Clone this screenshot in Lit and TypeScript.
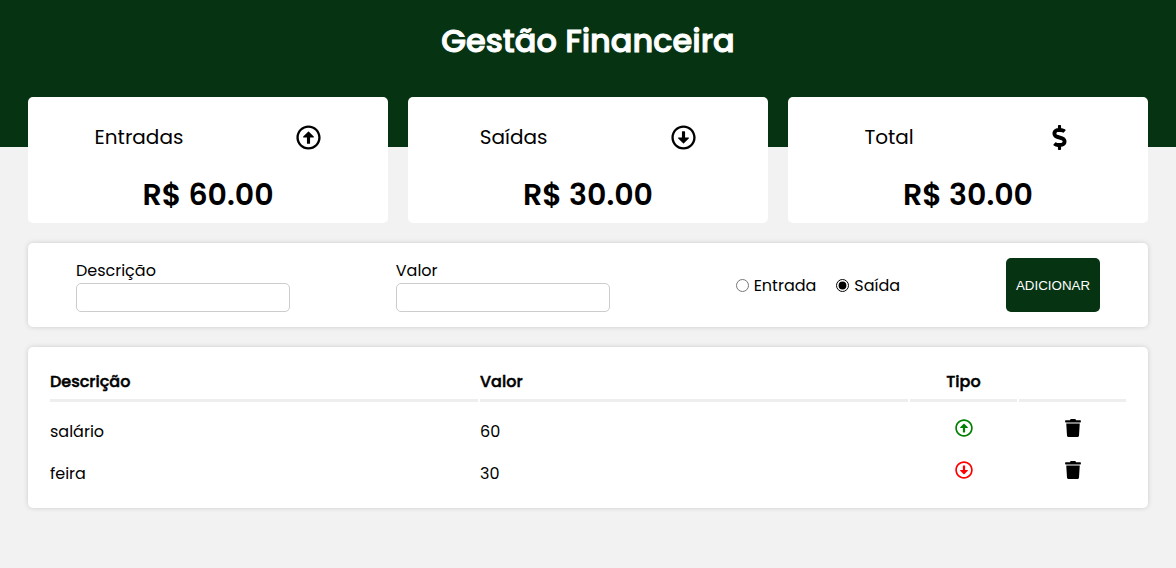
import { LitElement, html, css } from "lit";
import { customElement, property, state } from "lit/decorators.js";

type IconName = "up" | "down" | "dollar" | "trash";

const ICONS: Record<IconName, { box: string; d: string }> = {
  up: {
    box: "0 0 512 512",
    d: "M256 504c137 0 248-111 248-248S393 8 256 8 8 119 8 256s111 248 248 248zm0-448c110.5 0 200 89.5 200 200s-89.5 200-200 200S56 366.5 56 256 145.5 56 256 56zm20 328h-40c-6.6 0-12-5.4-12-12V256h-67c-10.7 0-16-12.9-8.5-20.5l99-99c4.7-4.7 12.3-4.7 17 0l99 99c7.6 7.6 2.2 20.5-8.5 20.5h-67v116c0 6.6-5.4 12-12 12z",
  },
  down: {
    box: "0 0 512 512",
    d: "M256 8C119 8 8 119 8 256s111 248 248 248 248-111 248-248S393 8 256 8zm0 448c-110.5 0-200-89.5-200-200S145.5 56 256 56s200 89.5 200 200-89.5 200-200 200zm-32-316v116h-67c-10.7 0-16 12.9-8.5 20.5l99 99c4.7 4.7 12.3 4.7 17 0l99-99c7.6-7.6 2.2-20.5-8.5-20.5h-67V140c0-6.6-5.4-12-12-12h-40c-6.6 0-12 5.4-12 12z",
  },
  dollar: {
    box: "0 0 288 512",
    d: "M209.2 233.4l-108-31.6C88.7 198.2 80 186.5 80 173.5c0-16.3 13.2-29.5 29.5-29.5h66.3c12.2 0 24.2 3.7 34.2 10.5 6.1 4.1 14.3 3.1 19.5-2l34.8-34c7.1-6.9 6.1-18.4-1.8-24.5C238 74.8 207.4 64.1 176 64V16c0-8.8-7.2-16-16-16h-32c-8.8 0-16 7.2-16 16v48h-2.5C45.8 64-5.4 118.7.5 183.6c4.2 46.1 39.4 83.6 83.8 96.6l102.5 30c12.5 3.7 21.2 15.3 21.2 28.3 0 16.3-13.2 29.5-29.5 29.5h-66.3C100 368 88 364.3 78 357.5c-6.1-4.1-14.3-3.1-19.5 2l-34.8 34c-7.1 6.9-6.1 18.4 1.8 24.5 24.5 19.2 55.1 29.9 86.5 30v48c0 8.8 7.2 16 16 16h32c8.8 0 16-7.2 16-16v-48.2c46.6-.9 90.3-28.6 105.7-72.7 21.5-61.6-14.6-124.8-72.5-141.7z",
  },
  trash: {
    box: "0 0 448 512",
    d: "M432 32H312l-9.4-18.7A24 24 0 0 0 281.1 0H166.8a23.72 23.72 0 0 0-21.4 13.3L136 32H16A16 16 0 0 0 0 48v32a16 16 0 0 0 16 16h416a16 16 0 0 0 16-16V48a16 16 0 0 0-16-16zM53.2 467a48 48 0 0 0 47.9 45h245.8a48 48 0 0 0 47.9-45L416 128H32z",
  },
};

@customElement("app-icon")
export class AppIcon extends LitElement {
  @property() name: IconName = "up";

  static styles = css`
    :host {
      display: block;
      width: 18px;
      height: 18px;
    }
    .glyph {
      display: block;
      width: 100%;
      height: 100%;
      fill: currentColor;
    }
  `;

  render() {
    const icon = ICONS[this.name];
    return html`<svg class="glyph" viewBox=${icon.box} aria-hidden="true"><path d=${icon.d}></path></svg>`;
  }
}

@customElement("resume-card")
export class ResumeCard extends LitElement {
  @property() label = "";
  @property() icon: IconName = "up";
  @property({ type: Number }) value = 0;

  static styles = css`
    :host {
      display: block;
      background: #fff;
      border-radius: 5px;
      padding: 20px 10px 5px;
    }
    .top {
      display: flex;
      align-items: center;
      justify-content: space-around;
      height: 40px;
      font-size: 20px;
    }
    .top app-icon {
      width: 25px;
      height: 25px;
    }
    .amount {
      margin: 15px 0 0;
      font-size: 30px;
      font-weight: 600;
      line-height: 46px;
      text-align: center;
    }
  `;

  render() {
    return html`
      <div class="top"><span>${this.label}</span><app-icon name=${this.icon}></app-icon></div>
      <p class="amount">R$ ${this.value.toFixed(2)}</p>
    `;
  }
}

interface Entry {
  id: number;
  desc: string;
  amount: number;
  expense: boolean;
}

@customElement("app-root")
export class AppRoot extends LitElement {
  @state() private entries: Entry[] = [
    { id: 1, desc: "salário", amount: 60, expense: false },
    { id: 2, desc: "feira", amount: 30, expense: true },
  ];
  @state() private desc = "";
  @state() private amount = "";
  @state() private expense = true;

  static styles = css`
    :host {
      display: block;
      min-height: 100vh;
      background: #f2f2f2;
      color: #000;
      font-family: Poppins, Inter, sans-serif;
      font-size: 16px;
      line-height: 25px;
    }
    * {
      box-sizing: border-box;
    }
    .header {
      background: #063312;
      color: #fff;
      text-align: center;
      padding: 17px 0 82px;
    }
    .title {
      margin: 0;
      font-size: 32px;
      font-weight: 500;
      -webkit-text-stroke: 1px currentColor;
      line-height: 48px;
    }
    .page {
      width: 98%;
      max-width: 1120px;
      margin: -50px auto 0;
      display: flex;
      flex-direction: column;
      gap: 20px;
    }
    .resume {
      display: grid;
      grid-template-columns: repeat(3, 1fr);
      gap: 20px;
    }
    .panel {
      background: #fff;
      border-radius: 5px;
      box-shadow: 0 0 5px #ccc;
    }
    .form {
      display: flex;
      justify-content: space-around;
      gap: 10px;
      padding: 15px 0;
    }
    .field {
      display: flex;
      flex-direction: column;
    }
    .input {
      width: 214px;
      height: 29px;
      padding: 5px 10px;
      border: 1px solid #ccc;
      border-radius: 5px;
      outline: none;
      background: #fff;
      font-family: inherit;
      font-size: 15px;
    }
    .kinds {
      display: flex;
      align-items: center;
    }
    .kind {
      display: flex;
      align-items: center;
    }
    .radio {
      width: 13px;
      height: 13px;
      margin: 0 5px 0 20px;
      accent-color: #000;
    }
    .add {
      padding: 5px 10px;
      border: none;
      border-radius: 5px;
      background: #063312;
      color: #fff;
      font-family: "Liberation Sans", Arial, sans-serif;
      cursor: pointer;
    }
    .list {
      padding: 20px;
    }
    .table {
      width: 100%;
      table-layout: fixed;
      border-spacing: 2px;
    }
    .table th {
      padding: 0 0 5px;
      border-bottom: 3px solid #eee;
      font-weight: 500;
      -webkit-text-stroke: 0.03em currentColor;
      text-align: left;
    }
    .table td {
      padding: 15px 0 0;
      vertical-align: top;
    }
    .table .wide {
      width: 40%;
    }
    .table .narrow {
      width: 10%;
      text-align: center;
    }
    .mark {
      margin: 0 auto;
    }
    .income {
      color: green;
    }
    .expense {
      color: red;
    }
    .remove {
      display: block;
      margin: 0 auto;
      padding: 0;
      border: none;
      background: none;
      color: inherit;
      cursor: pointer;
    }
  `;

  private sum(expense: boolean) {
    return this.entries.filter((e) => e.expense === expense).reduce((total, e) => total + e.amount, 0);
  }

  private add(event: Event) {
    event.preventDefault();
    const amount = Number(this.amount);
    if (!this.desc || !(amount > 0)) return;
    this.entries = [...this.entries, { id: Date.now(), desc: this.desc, amount, expense: this.expense }];
    this.desc = "";
    this.amount = "";
  }

  private remove(id: number) {
    this.entries = this.entries.filter((e) => e.id !== id);
  }

  render() {
    const income = this.sum(false);
    const spent = this.sum(true);
    return html`
      <header class="header"><h1 class="title">Gestão Financeira</h1></header>
      <main class="page">
        <section class="resume">
          <resume-card label="Entradas" icon="up" .value=${income}></resume-card>
          <resume-card label="Saídas" icon="down" .value=${spent}></resume-card>
          <resume-card label="Total" icon="dollar" .value=${income - spent}></resume-card>
        </section>
        <form class="panel form" @submit=${this.add}>
          <div class="field">
            <label for="desc">Descrição</label>
            <input class="input" id="desc" type="text" .value=${this.desc}
              @input=${(e: Event) => (this.desc = (e.target as HTMLInputElement).value)} />
          </div>
          <div class="field">
            <label for="amount">Valor</label>
            <input class="input" id="amount" type="number" .value=${this.amount}
              @input=${(e: Event) => (this.amount = (e.target as HTMLInputElement).value)} />
          </div>
          <div class="kinds">
            <label class="kind">
              <input class="radio" type="radio" name="kind" .checked=${!this.expense} @change=${() => (this.expense = false)} />
              Entrada
            </label>
            <label class="kind">
              <input class="radio" type="radio" name="kind" .checked=${this.expense} @change=${() => (this.expense = true)} />
              Saída
            </label>
          </div>
          <button class="add" type="submit">ADICIONAR</button>
        </form>
        <section class="panel list">
          <table class="table">
            <thead>
              <tr>
                <th class="wide">Descrição</th>
                <th class="wide">Valor</th>
                <th class="narrow">Tipo</th>
                <th class="narrow"></th>
              </tr>
            </thead>
            <tbody>
              ${this.entries.map(
                (e) => html`
                  <tr>
                    <td>${e.desc}</td>
                    <td>${e.amount}</td>
                    <td>
                      <app-icon class="mark ${e.expense ? "expense" : "income"}" name=${e.expense ? "down" : "up"}></app-icon>
                    </td>
                    <td>
                      <button class="remove" type="button" aria-label="Excluir" @click=${() => this.remove(e.id)}>
                        <app-icon name="trash"></app-icon>
                      </button>
                    </td>
                  </tr>
                `
              )}
            </tbody>
          </table>
        </section>
      </main>
    `;
  }
}
